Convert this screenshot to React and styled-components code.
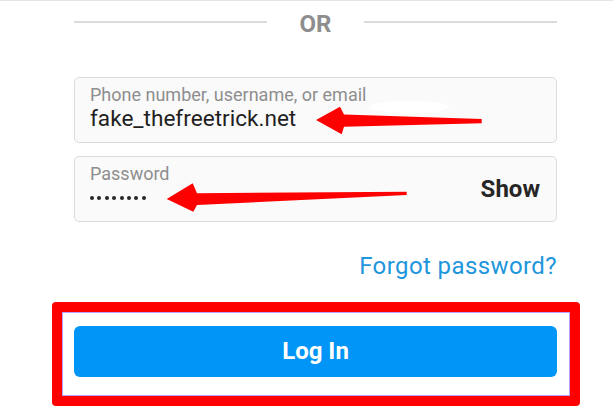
import React from 'react';
import styled, { createGlobalStyle } from 'styled-components';

const GlobalStyle = createGlobalStyle`
  html, body { margin: 0; padding: 0; background: #ffffff; }
  body { font-family: Roboto, "Noto Sans", "Liberation Sans", Arial, sans-serif; }
`;

const Page = styled.main`
  width: 613px;
  height: 418px;
  box-sizing: border-box;
  border-top: 1px solid #e6e6e6;
  padding: 0 56px 0 74px;
  display: flex;
  flex-direction: column;
  overflow: hidden;
`;

const Divider = styled.div`
  display: flex;
  align-items: center;
  height: 28px;
  margin-top: 8.6px;
`;

const Rule = styled.div`
  flex: 1;
  height: 2px;
  margin-bottom: 3px;
  background: #dbdbdb;
`;

const OrText = styled.span`
  margin: 0 33px;
  font-size: 24px;
  line-height: 28px;
  font-weight: 700;
  color: #8e8e8e;
`;

const Fields = styled.div`
  display: flex;
  flex-direction: column;
  gap: 13px;
  margin-top: 39.4px;
`;

const Field = styled.div`
  position: relative;
  box-sizing: border-box;
  height: 66px;
  border: 1px solid #dbdbdb;
  border-radius: 5px;
  background: #fafafa;
  padding: 0 16px 0 15px;
  display: flex;
  align-items: center;
`;

const FieldText = styled.div`
  align-self: flex-start;
  flex: 1;
  padding-top: 7px;
  display: flex;
  flex-direction: column;
`;

const Label = styled.span`
  font-size: 18px;
  line-height: 20px;
  color: #8e8e8e;
`;

const Value = styled.span`
  margin-top: 1px;
  font-size: 22.6px;
  line-height: 26px;
  color: #1f1f1f;
`;

const Dots = styled.div`
  margin-top: 1px;
  height: 26px;
  display: flex;
  align-items: center;
  gap: 3.4px;
`;

const Dot = styled.span`
  width: 4px;
  height: 4px;
  border-radius: 50%;
  background: #262626;
`;

const ShowButton = styled.span`
  font-size: 24px;
  line-height: 28px;
  font-weight: 700;
  color: #262626;
`;

const Forgot = styled.a`
  align-self: flex-end;
  margin-top: 30px;
  font-size: 24px;
  line-height: 28px;
  letter-spacing: 0.4px;
  color: #1e96dc;
  text-decoration: none;
`;

const Highlight = styled.div`
  margin: 22px -23px 0 -22px;
  border: 10px solid #ff0000;
  border-radius: 4px;
  padding: 14px 13px 19px 12px;
  box-shadow: inset 0 0 0 1px rgba(165, 130, 255, 0.75);
`;

const LoginButton = styled.button`
  display: block;
  width: 100%;
  height: 51px;
  border: none;
  border-radius: 6px;
  background: #0095f6;
  color: #ffffff;
  font-family: Roboto, "Noto Sans", "Liberation Sans", Arial, sans-serif;
  font-size: 24px;
  font-weight: 700;
  padding: 0;
`;

const ArrowLayer = styled.svg`
  position: absolute;
  top: -1px;
  left: -1px;
  overflow: visible;
  pointer-events: none;
`;

function Arrow({ points, smudge }) {
  return (
    <ArrowLayer width="483" height="66" viewBox="0 0 483 66">
      {smudge && <ellipse cx={smudge.cx} cy={smudge.cy} rx={smudge.rx} ry={smudge.ry} fill="#ffffff" />}
      <polygon points={points} fill="#ff0000" />
    </ArrowLayer>
  );
}

export default function App() {
  return (
    <>
      <GlobalStyle />
      <Page>
        <Divider>
          <Rule />
          <OrText>OR</OrText>
          <Rule />
        </Divider>
        <Fields>
          <Field>
            <FieldText>
              <Label>Phone number, username, or email</Label>
              <Value>fake_thefreetrick.net</Value>
            </FieldText>
            <Arrow
              smudge={{ cx: 335, cy: 30, rx: 40, ry: 6 }}
              points="242,43 266,29.7 270,37.5 407.7,42 407.7,46.3 270,49.7 267.7,57.3"
            />
          </Field>
          <Field>
            <FieldText>
              <Label>Password</Label>
              <Dots>
                {Array.from({ length: 8 }).map((_, i) => (
                  <Dot key={i} />
                ))}
              </Dots>
            </FieldText>
            <ShowButton>Show</ShowButton>
            <Arrow points="92.7,43 118.7,27.3 123,37.3 332.7,35.7 332.7,39 123,49 119.3,55.7" />
          </Field>
        </Fields>
        <Forgot href="#">Forgot password?</Forgot>
        <Highlight>
          <LoginButton>Log In</LoginButton>
        </Highlight>
      </Page>
    </>
  );
}
